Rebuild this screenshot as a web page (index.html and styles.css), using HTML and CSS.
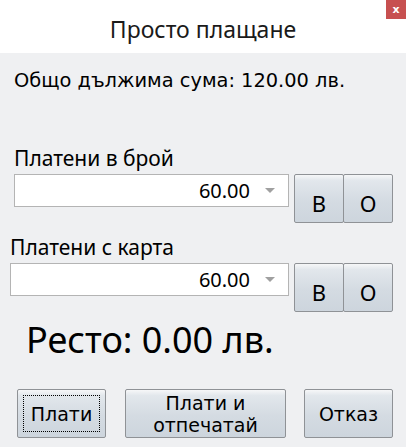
FILE: index.html
```html
<!DOCTYPE html>
<html lang="bg">
<head>
    <meta charset="UTF-8">
    <title>Просто плащане</title>
    <link rel="stylesheet" href="styles.css">
</head>
<body>

<!-- Title Bar -->
<div class="titlebar">
    <h1 class="title">Просто плащане</h1>
    <button class="close-btn">x</button>
</div>

<!-- Payment Form -->
<div class="content">
    <p class="total">Общо дължима сума: 120.00 лв.</p>

    <div class="field field-cash">
        <label class="field-label">Платени в брой</label>
        <div class="field-row">
            <div class="combo">
                <span class="combo-value">60.00</span>
                <span class="combo-arrow"></span>
            </div>
            <button class="btn btn-square">В</button>
            <button class="btn btn-square">О</button>
        </div>
    </div>

    <div class="field field-card">
        <label class="field-label">Платени с карта</label>
        <div class="field-row">
            <div class="combo">
                <span class="combo-value">60.00</span>
                <span class="combo-arrow"></span>
            </div>
            <button class="btn btn-square">В</button>
            <button class="btn btn-square">О</button>
        </div>
    </div>

    <p class="change">Ресто: 0.00 лв.</p>

    <div class="actions">
        <button class="btn btn-action btn-pay"><span class="focus-box">Плати</span></button>
        <button class="btn btn-action btn-print">Плати и<br>отпечатай</button>
        <button class="btn btn-action btn-cancel">Отказ</button>
    </div>
</div>

</body>
</html>
```

FILE: styles.css
```css
* {
    margin: 0;
    padding: 0;
    box-sizing: border-box;
}

body {
    width: 406px;
    height: 447px;
    background: #eff0f2;
    font-family: "Noto Sans", sans-serif;
    color: #000;
    overflow: hidden;
}

/* Title Bar */
.titlebar {
    position: relative;
    height: 53px;
    background: #fff;
    display: flex;
    justify-content: center;
    align-items: center;
}

.title {
    font-weight: normal;
    font-size: 23px;
    color: #1a1a1a;
    margin-top: 4px;
}

.close-btn {
    position: absolute;
    top: 0;
    right: 0;
    width: 20px;
    height: 19px;
    background: #c75050;
    color: #fff;
    border: none;
    font-family: "DejaVu Sans", sans-serif;
    font-size: 11px;
    font-weight: bold;
    line-height: 17px;
}

/* Content */
.total {
    font-family: "DejaVu Sans", sans-serif;
    font-size: 19.4px;
    line-height: 24px;
    padding: 16px 0 0 14px;
    height: 92px;
}

.field-label {
    display: block;
    font-size: 21px;
    line-height: 26px;
}

.field-row {
    display: flex;
    align-items: flex-start;
    margin-top: 3px;
}

.field-cash {
    padding-left: 14px;
}

.field-card {
    padding-left: 10px;
    margin-top: 11px;
}

.field-cash .combo {
    width: 275px;
}

.field-card .combo {
    width: 279px;
}

.combo {
    height: 33px;
    background: #fff;
    border: 1px solid #b4b4b4;
    display: flex;
    align-items: center;
    justify-content: flex-end;
    padding-right: 13px;
    margin-right: 5px;
}

.combo-value {
    font-size: 20px;
}

.combo-arrow {
    width: 0;
    height: 0;
    border-left: 5px solid transparent;
    border-right: 5px solid transparent;
    border-top: 5px solid #a0a0a0;
    margin-left: 15px;
}

/* Buttons */
.btn {
    background: linear-gradient(#f6f7f8 0%, #e2e7ec 12%, #d4dbe2 55%, #cdd5dd 100%);
    border: 1px solid #8f9296;
    border-radius: 2px;
    font-family: "Noto Sans", sans-serif;
    color: #000;
}

.btn-square {
    width: 50px;
    height: 49px;
    font-size: 22px;
    padding-top: 8px;
}

.btn-square + .btn-square {
    margin-left: -1px;
}

.change {
    font-size: 36px;
    line-height: 44px;
    padding: 6px 0 0 26px;
    height: 77px;
}

.actions {
    display: flex;
    align-items: flex-start;
    padding-left: 17px;
}

.btn-action {
    height: 49px;
    font-family: "DejaVu Sans", sans-serif;
    font-size: 19px;
    line-height: 22px;
}

.btn-pay {
    width: 89px;
    padding: 5px;
}

.focus-box {
    display: flex;
    align-items: center;
    justify-content: center;
    height: 100%;
    border: 1px dotted #000;
}

.btn-print {
    width: 161px;
    margin-left: 19px;
    padding-top: 2px;
    overflow: hidden;
    display: flex;
    align-items: flex-start;
    justify-content: center;
}

.btn-cancel {
    width: 89px;
    margin-left: 18px;
}
```
